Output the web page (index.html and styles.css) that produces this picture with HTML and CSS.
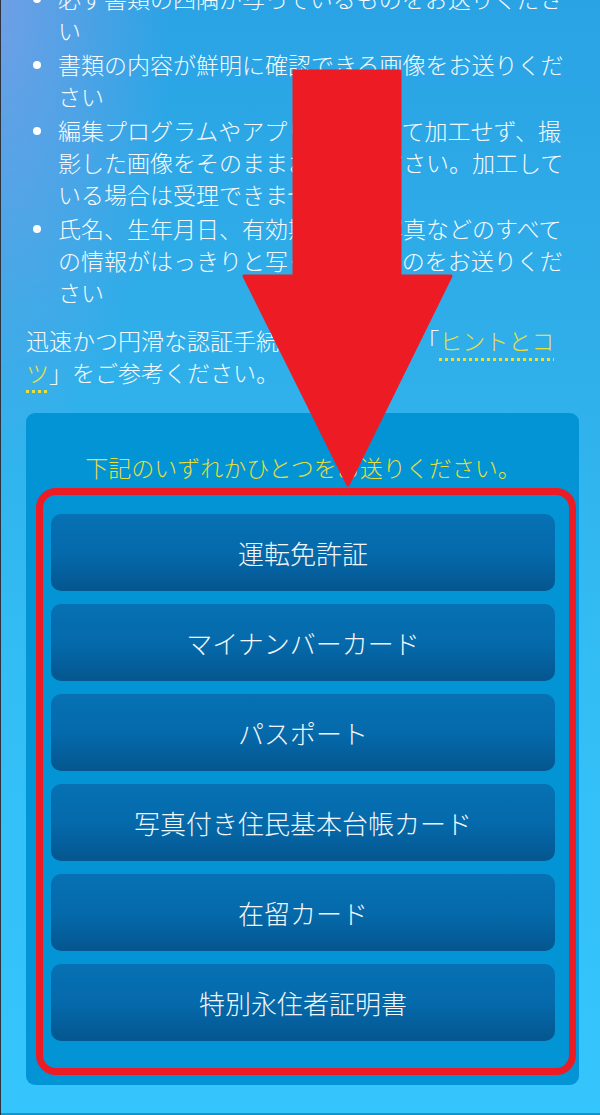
FILE: index.html
```html
<!DOCTYPE html>
<html lang="ja">
<head>
    <meta charset="utf-8">
    <link rel="stylesheet" href="styles.css">
</head>
<body>
    <div class="screen">
        <div class="content">
            <ul class="rules">
                <li>必ず書類の四隅が写っているものをお送りください</li>
                <li>書類の内容が鮮明に確認できる画像をお送りください</li>
                <li>編集プログラムやアプリを使用して加工せず、撮影した画像をそのままお送りください。加工している場合は受理できません。</li>
                <li>氏名、生年月日、有効期限、顔写真などのすべての情報がはっきりと写っているものをお送りください</li>
            </ul>
            <p class="hint">迅速かつ円滑な認証手続きのために、「<a class="hint-link" href="#">ヒントとコツ</a>」をご参考ください。</p>

            <div class="doc-box">
                <p class="doc-title">下記のいずれかひとつをお送りください。</p>
                <div class="doc-list">
                    <button class="doc-btn">運転免許証</button>
                    <button class="doc-btn">マイナンバーカード</button>
                    <button class="doc-btn">パスポート</button>
                    <button class="doc-btn">写真付き住民基本台帳カード</button>
                    <button class="doc-btn">在留カード</button>
                    <button class="doc-btn">特別永住者証明書</button>
                </div>
                <!-- annotation frame drawn over the buttons -->
                <div class="mark-frame"></div>
            </div>
        </div>
        <div class="next-section"></div>

        <!-- annotation arrow -->
        <svg class="mark-arrow" width="600" height="1115" viewBox="0 0 600 1115">
            <polygon points="293,71 399,71 399,276 450,276 347,485 243,276 293,276"
                     fill="#ed1c24" stroke="#ed1c24" stroke-width="3" stroke-linejoin="round"/>
        </svg>
    </div>
</body>
</html>
```

FILE: styles.css
```css
html, body {
    margin: 0;
    padding: 0;
}
body {
    font-family: "Noto Sans CJK JP", "Noto Sans", sans-serif;
    font-weight: 300;
    color: #f5fafe;
    text-spacing-trim: space-all;
}
.screen {
    position: relative;
    width: 600px;
    height: 1115px;
    overflow: hidden;
    box-sizing: border-box;
    border-left: 1px solid #2a3340;
    background:
        radial-gradient(ellipse 170px 460px at 0 0, rgba(128, 158, 230, 0.8), rgba(128, 158, 230, 0) 100%),
        linear-gradient(to bottom, #2aa3e4 0%, #2faee9 30%, #33bdf5 60%, #35c5fd 100%);
}
.content {
    padding: 0 26px 0 25px;
    margin-top: -18px;
}
.rules {
    list-style: none;
    margin: 0;
    padding: 0 0 0 32px;
    font-size: 23px;
    line-height: 32px;
}
.rules li {
    position: relative;
    margin-bottom: 2px;
}
.rules li::before {
    content: "";
    position: absolute;
    left: -25px;
    top: 13px;
    width: 8px;
    height: 8px;
    border-radius: 50%;
    background-color: #fff;
}
.hint {
    margin: 16px 0 0;
    font-size: 23px;
    line-height: 32px;
}
.hint-link {
    color: #ece03c;
    text-decoration: underline dotted #ece03c;
    text-decoration-thickness: 3px;
    text-underline-offset: 8px;
}
.doc-box {
    position: relative;
    margin: 25px -5px 0 0;
    padding: 38px 24px 44px 25px;
    background-color: #0294d5;
    border-radius: 9px;
}
.doc-title {
    margin: 0 0 31px;
    text-align: center;
    font-size: 23px;
    line-height: 32px;
    color: #e8dd3a;
}
.doc-list {
    display: flex;
    flex-direction: column;
    gap: 13px;
}
.doc-btn {
    display: flex;
    align-items: center;
    justify-content: center;
    height: 77px;
    padding: 0;
    border: none;
    border-radius: 10px;
    background: linear-gradient(to bottom, #0671b4 0%, #056aab 50%, #04568f 100%);
    color: #f2f6fa;
    font-family: inherit;
    font-weight: inherit;
    font-size: 26px;
    cursor: pointer;
}
.mark-frame {
    position: absolute;
    left: 10px;
    top: 75px;
    width: 540px;
    height: 587px;
    box-sizing: border-box;
    border: 7px solid #ed1c24;
    border-radius: 20px;
    pointer-events: none;
}
.next-section {
    margin-top: 28px;
    height: 12px;
    background-color: #1a93cc;
}
.mark-arrow {
    position: absolute;
    top: 0;
    left: 0;
    pointer-events: none;
}
```
